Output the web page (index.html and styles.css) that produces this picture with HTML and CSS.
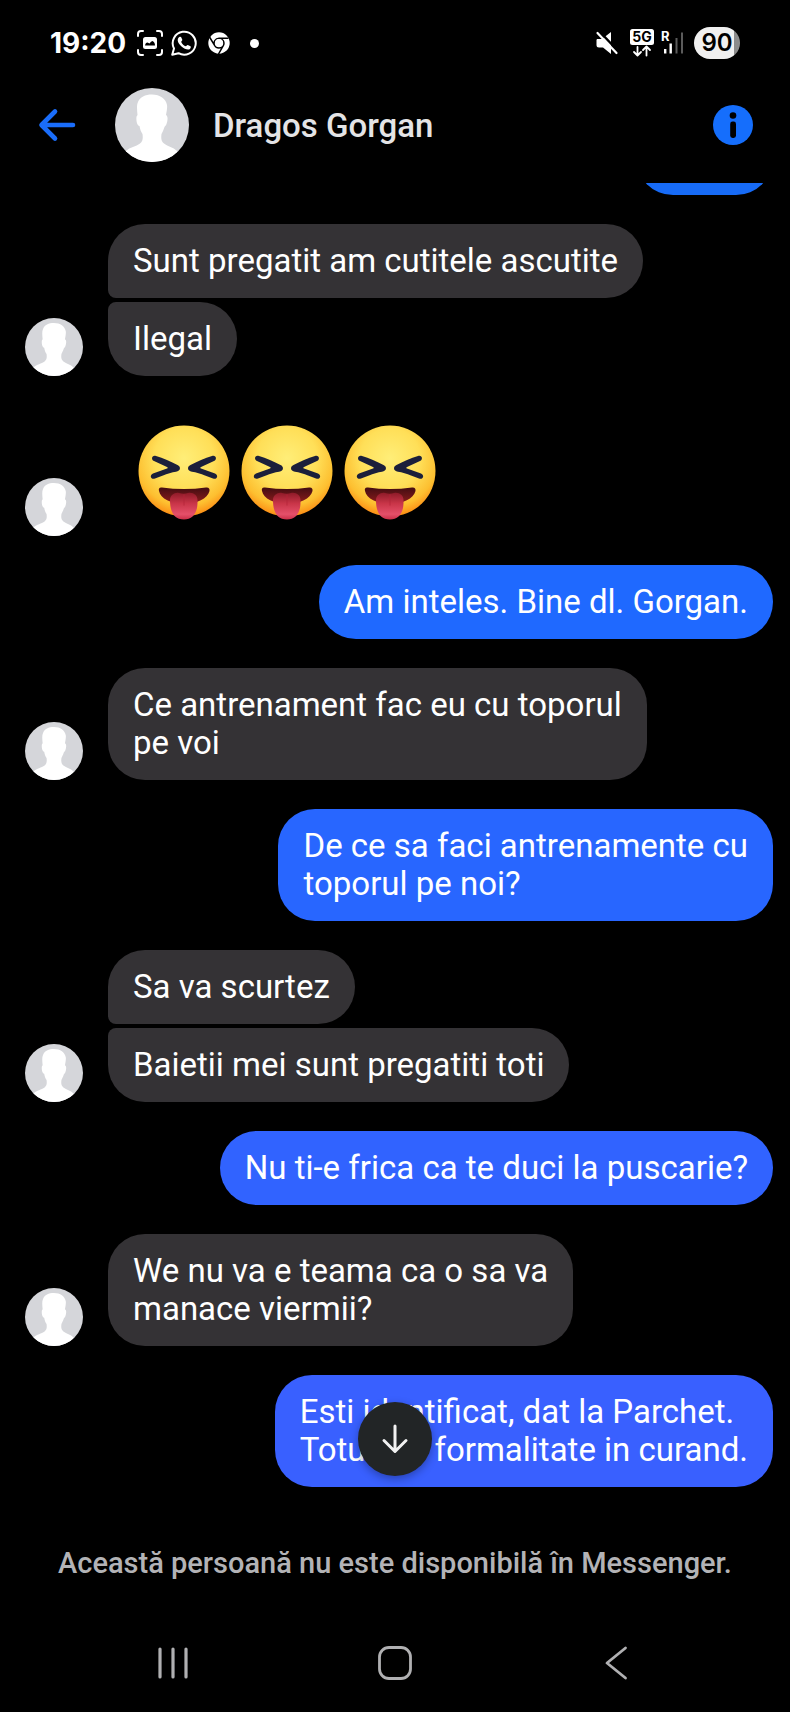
FILE: index.html
```html
<!DOCTYPE html>
<html lang="ro">
<head>
<meta charset="utf-8">
<meta name="viewport" content="width=device-width, initial-scale=1">
<title>Dragos Gorgan</title>
<link rel="stylesheet" href="styles.css">
</head>
<body>
<svg class="sprite" aria-hidden="true">
  <defs>
    <radialGradient id="face" cx="50%" cy="36%" r="66%">
      <stop offset="0" stop-color="#ffee78"/>
      <stop offset="0.5" stop-color="#ffdf58"/>
      <stop offset="0.8" stop-color="#fdbf30"/>
      <stop offset="1" stop-color="#fb8410"/>
    </radialGradient>
    <linearGradient id="mouth" x1="0" y1="0" x2="0" y2="1">
      <stop offset="0" stop-color="#430d12"/>
      <stop offset="1" stop-color="#8d1c1c"/>
    </linearGradient>
    <linearGradient id="tongue" x1="0" y1="0" x2="0" y2="1">
      <stop offset="0" stop-color="#8f1a28"/>
      <stop offset="0.4" stop-color="#c93548"/>
      <stop offset="0.8" stop-color="#e5506a"/>
      <stop offset="1" stop-color="#cb2f48"/>
    </linearGradient>
    <clipPath id="disc"><circle cx="37" cy="37" r="37"/></clipPath>
  </defs>
  <symbol id="person" viewBox="0 0 74 74">
    <circle cx="37" cy="37" r="37" fill="#d5d6da"/>
    <g clip-path="url(#disc)">
      <path fill="#fff" d="M23 14C25 9 30 6.500 37 6.500C45 6.500 51 11 52 17C52.500 20 51.500 24 51 27C53 28 53 32 51.500 36C51 38 50 37.500 49.500 39C48.500 42 47.500 44 46.500 46C46 50 46 53 49 55.500C53 58.500 58 59 62 63L63 76H11V63C15 59 21 58.500 25 55.500C28 53 28 50 27.500 46C26 44 25 41 24.500 38C22 38 21 32 21.500 29C21.500 27.500 22.500 27.500 22.500 27C22 22 21.500 17 23 14Z"/>
    </g>
  </symbol>
  <symbol id="laugh" viewBox="0 0 92 96">
    <circle cx="46" cy="46" r="45.500" fill="url(#face)"/>
    <path fill="#1b1f3b" d="M18 31C14 29.500 12.500 34.500 16 36L29 42C30 42.600 30 43 29 43.500L15 48.500C11 50.500 13 55 17 53.500L25 50.500C29 49 34 47.300 38 46.800C43 46 43 41.500 39.500 40C33 36.500 25 33 18 31Z"/>
    <path fill="#1b1f3b" d="M74 31C78 29.500 79.500 34.500 76 36L63 42C62 42.600 62 43 63 43.500L77 48.500C81 50.500 79 55 75 53.500L67 50.500C63 49 58 47.300 54 46.800C49 46 49 41.500 52.500 40C59 36.500 67 33 74 31Z"/>
    <path fill="url(#mouth)" d="M24 62.500Q46 65.500 68 62.500Q72 62 71.500 66C69.500 74 59 78.500 46 78.500C33 78.500 22.500 74 21 66Q20 62 24 62.500Z"/>
    <path fill="url(#tongue)" d="M32 75C32 70 37 67 41 68Q46 69.500 50 68C55 67 59.500 70 59.500 75C60 87 55.500 94.500 46 94.500C36 94.500 32 87 32 75Z"/>
    <path fill="none" stroke="#b52439" stroke-width="1.500" stroke-linecap="round" opacity=".5" d="M46 70V80"/>
  </symbol>
</svg>

<div class="status">
  <time class="clock">19:20</time>
  <svg class="icon-shot" viewBox="0 0 26 26" width="26" height="26" aria-hidden="true">
    <path fill="none" stroke="#fff" stroke-width="2" stroke-linecap="round" d="M1 6V4Q1 1 4 1H6M20 1H22Q25 1 25 4V6M25 20V22Q25 25 22 25H20M6 25H4Q1 25 1 22V20"/>
    <rect x="6" y="7" width="14" height="12" rx="2.500" fill="#fff"/>
    <path fill="#000" d="M8 15.500Q8.500 12.500 10.500 12.500L12.500 13.500Q14 11 15.500 11Q18 12 18 15.500Z"/>
  </svg>
  <svg class="icon-wa" viewBox="0 0 26 26" width="26" height="26" aria-hidden="true">
    <path fill="none" stroke="#fff" stroke-width="2" stroke-linejoin="round" d="M1.200 24.800L3 18.500A11.500 11.500 0 1 1 7.500 23.200Z"/>
    <path fill="#fff" d="M8.700 6.800C9.300 6.500 10 6.600 10.200 7.200L11.300 9.800C11.500 10.500 10.500 11.300 10.200 11.900C11.200 14 12.800 15.400 14.900 16.300C15.500 15.900 16.100 14.700 16.800 14.900L19.500 16.200C20.100 16.600 19.800 18.200 18.900 19C15.800 21.400 7 15.500 6.700 10.300C6.700 8.700 7.700 7.300 8.700 6.800Z"/>
  </svg>
  <svg class="icon-chrome" viewBox="0 0 22 22" width="22" height="22" aria-hidden="true">
    <circle cx="11" cy="11" r="10.700" fill="#fff"/>
    <path fill="none" stroke="#000" stroke-width="1.500" d="M20.500 6.200H11A5 5 0 0 0 6.600 13.400M1.500 5L6.600 13.400A5 5 0 0 0 15.300 13.600M10.500 22L15.300 13.600A5 5 0 0 0 11 6.200"/>
    <circle cx="11" cy="11" r="4" fill="#fff"/>
  </svg>
  <span class="more-dot"></span>
  <svg class="icon-mute" viewBox="0 0 24 24" width="24" height="24" aria-label="Sunet oprit">
    <path fill="#fff" d="M2 8H7L16 1V23L8 16.500H4Q1.500 16.500 1.500 14V9Z"/>
    <path stroke="#000" stroke-width="2.500" d="M3.500 -0.500L24 21"/>
    <path stroke="#fff" stroke-width="2.200" stroke-linecap="round" d="M2.500 2L21.500 22"/>
  </svg>
  <svg class="icon-5g" viewBox="0 0 24 28" width="24" height="28" aria-label="5G">
    <rect width="24" height="16" rx="2.500" fill="#fff"/>
    <text x="12" y="13" text-anchor="middle" class="net-label">5G</text>
    <path fill="none" stroke="#fff" stroke-width="1.800" stroke-linecap="round" stroke-linejoin="round" d="M7.500 18V26M4 23L7.500 26.500L11 23M16.500 26.500V18M13 21L16.500 17.500L20 21"/>
  </svg>
  <svg class="icon-signal" viewBox="0 0 23 30" width="23" height="30" aria-label="Semnal">
    <text x="0" y="13" class="roam-label">R</text>
    <path stroke="#fff" stroke-width="2.400" d="M4.200 21V25.500M9.700 15.500V25.500"/>
    <path stroke="#5b5b5b" stroke-width="2" d="M15.500 10V25.500M21 4.500V25.500"/>
  </svg>
  <span class="battery">90</span>
</div>

<header class="topbar">
  <button class="plain back" aria-label="Înapoi">
    <svg viewBox="0 0 38 34" width="38" height="34"><path fill="none" stroke="#1a6dfa" stroke-width="4.600" stroke-linecap="round" stroke-linejoin="round" d="M35 17H4M17 3.500L3.500 17L17 30.500"/></svg>
  </button>
  <svg class="avatar-large" aria-hidden="true"><use href="#person"/></svg>
  <h1 class="name">Dragos Gorgan</h1>
  <button class="plain info" aria-label="Informații">
    <svg viewBox="0 0 40 40" width="40" height="40"><circle cx="20" cy="20" r="20" fill="#156efc"/><circle cx="20" cy="10.500" r="3.300"/><rect x="17.200" y="16.500" width="5.800" height="16.500" rx="2.400"/></svg>
  </button>
</header>

<main class="chat">
  <div class="bubble out cut tone-a" aria-hidden="true"></div>

  <div class="row">
    <svg class="avatar" aria-hidden="true"><use href="#person"/></svg>
    <div class="stack">
      <p class="bubble in first">Sunt pregatit am cutitele ascutite</p>
      <p class="bubble in last">Ilegal</p>
    </div>
  </div>

  <div class="row emoji-row">
    <svg class="avatar" aria-hidden="true"><use href="#person"/></svg>
    <div class="emojis" role="img" aria-label="😝😝😝">
      <svg class="emoji"><use href="#laugh"/></svg>
      <svg class="emoji"><use href="#laugh"/></svg>
      <svg class="emoji"><use href="#laugh"/></svg>
    </div>
  </div>

  <p class="bubble out tone-b">Am inteles. Bine dl. Gorgan.</p>

  <div class="row">
    <svg class="avatar" aria-hidden="true"><use href="#person"/></svg>
    <p class="bubble in">Ce antrenament fac eu cu toporul<br>pe voi</p>
  </div>

  <p class="bubble out tone-c">De ce sa faci antrenamente cu<br>toporul pe noi?</p>

  <div class="row">
    <svg class="avatar" aria-hidden="true"><use href="#person"/></svg>
    <div class="stack">
      <p class="bubble in first">Sa va scurtez</p>
      <p class="bubble in last">Baietii mei sunt pregatiti toti</p>
    </div>
  </div>

  <p class="bubble out tone-d">Nu ti-e frica ca te duci la puscarie?</p>

  <div class="row">
    <svg class="avatar" aria-hidden="true"><use href="#person"/></svg>
    <p class="bubble in">We nu va e teama ca o sa va<br>manace viermii?</p>
  </div>

  <p class="bubble out tone-e">Esti identificat, dat la Parchet.<br>Totul e o formalitate in curand.</p>

  <button class="scroll-down" aria-label="Derulează în jos">
    <svg viewBox="0 0 30 32" width="30" height="32"><path fill="none" stroke="#f2f2f2" stroke-width="3" stroke-linecap="round" stroke-linejoin="round" d="M15 3V28M4 17.500L15 28.500L26 17.500"/></svg>
  </button>
</main>

<p class="notice">Această persoană nu este disponibilă în Messenger.</p>

<nav class="sysnav">
  <button class="plain" aria-label="Recente"><svg viewBox="0 0 34 34" width="34" height="34"><path stroke="#b0b0b2" stroke-width="3.200" stroke-linecap="round" d="M4 3V31M17 3V31M30 3V31"/></svg></button>
  <button class="plain" aria-label="Acasă"><svg viewBox="0 0 34 34" width="34" height="34"><rect x="1.500" y="1.500" width="31" height="31" rx="9.500" fill="none" stroke="#b0b0b2" stroke-width="2.800"/></svg></button>
  <button class="plain" aria-label="Înapoi"><svg viewBox="0 0 34 34" width="34" height="34"><path fill="none" stroke="#b0b0b2" stroke-width="2.800" stroke-linecap="round" stroke-linejoin="round" d="M25.500 2L7 17L25.500 32"/></svg></button>
</nav>
</body>
</html>
```
FILE: styles.css
```css
* {
  box-sizing: border-box;
}

body {
  margin: 0;
  min-height: 100vh;
  display: flex;
  flex-direction: column;
  background: #000;
  color: #fff;
  font-family: Roboto, "Liberation Sans", sans-serif;
}

p,
h1 {
  margin: 0;
}

svg {
  display: block;
  flex: none;
}

.sprite {
  position: absolute;
  width: 0;
  height: 0;
}

.plain {
  border: 0;
  padding: 0;
  background: none;
  display: flex;
}

/* Status bar */
.status {
  display: flex;
  align-items: center;
  height: 76px;
  padding: 27px 50px 17px;
  font-family: Inter, Roboto, sans-serif;
}

.clock {
  font-size: 28px;
  font-weight: 700;
  line-height: 32px;
}

.icon-shot {
  margin-left: 11px;
}

.icon-wa {
  margin-left: 8px;
}

.icon-chrome {
  margin-left: 11px;
}

.more-dot {
  width: 9px;
  height: 9px;
  margin-left: 20px;
  border-radius: 50%;
  background: #fff;
}

.icon-mute {
  margin-left: auto;
}

.icon-5g {
  margin-left: 11px;
}

.icon-signal {
  margin-left: 7px;
  overflow: visible;
}

.net-label {
  font-size: 14px;
  font-weight: 700;
  fill: #000;
}

.roam-label {
  font-size: 13px;
  font-weight: 700;
  fill: #fff;
}

.battery {
  width: 46px;
  height: 32px;
  margin-left: 10px;
  border-radius: 16px;
  background: linear-gradient(90deg, #f0f0f0 88%, #8c8c8c 88%);
  color: #000;
  font-size: 24px;
  font-weight: 600;
  line-height: 32px;
  text-align: center;
}

/* Conversation header */
.topbar {
  display: flex;
  align-items: center;
  padding: 12px 37px 21px 38px;
}

.avatar-large {
  width: 74px;
  height: 74px;
  margin-left: 39px;
}

.name {
  flex: 1;
  margin-left: 24px;
  padding-top: 2px;
  color: #e4e4e6;
  font-size: 33px;
  font-weight: 500;
  line-height: 40px;
}

/* Messages */
.chat {
  position: relative;
  display: flex;
  flex-direction: column;
  gap: 29px;
  padding: 0 17px 0 25px;
  overflow: hidden;
}

.row {
  display: flex;
  align-items: flex-end;
  gap: 25px;
}

.avatar {
  width: 58px;
  height: 58px;
}

.stack {
  display: flex;
  flex-direction: column;
  align-items: flex-start;
  gap: 4px;
}

.bubble {
  padding: 18px 25px;
  border-radius: 37px;
  font-size: 33px;
  line-height: 38px;
}

.in {
  background: #343235;
}

.first {
  border-bottom-left-radius: 8px;
}

.last {
  border-top-left-radius: 8px;
}

.out {
  align-self: flex-end;
}

.cut {
  width: 137px;
  height: 74px;
  margin-top: -62px;
}

.tone-a {
  background: #176bf6;
}

.tone-b {
  background: #1f69ff;
}

.tone-c {
  background: #2866ff;
}

.tone-d {
  background: #3163ff;
}

.tone-e {
  background: #3960ff;
}

.emoji-row {
  padding-top: 20px;
}

.emojis {
  display: flex;
  gap: 11px;
  padding: 0 0 15px 30px;
}

.emoji {
  width: 92px;
  height: 96px;
}

.scroll-down {
  position: absolute;
  bottom: 11px;
  left: 50%;
  width: 74px;
  height: 74px;
  margin-left: -37px;
  border: 0;
  padding: 0;
  border-radius: 50%;
  background: #222526;
  box-shadow: 0 3px 8px rgba(0, 0, 0, 0.3);
  display: flex;
  align-items: center;
  justify-content: center;
}

/* Unavailable notice */
.notice {
  margin-top: 58px;
  padding: 0 24px;
  color: #b3b3b6;
  font-size: 29px;
  font-weight: 500;
  line-height: 36px;
  text-align: center;
}

/* System navigation */
.sysnav {
  display: grid;
  grid-template-columns: repeat(3, 1fr);
  justify-items: center;
  margin-top: auto;
  padding: 0 62px 32px;
}
```
